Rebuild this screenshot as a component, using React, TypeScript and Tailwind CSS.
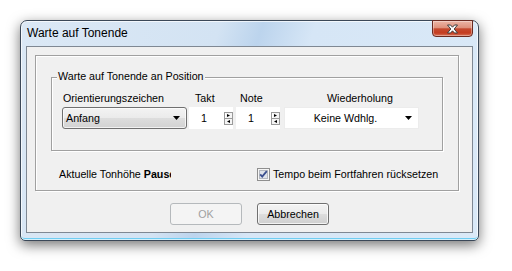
import React from "react";

function SpinArrows() {
  return (
    <svg width="9" height="13" viewBox="0 0 9 13" className="block">
      <rect x="0.5" y="0.5" width="8" height="12" fill="#f4f4f4" stroke="#9a9a9a" />
      <line x1="0.5" y1="6.5" x2="8.5" y2="6.5" stroke="#9a9a9a" />
      <line x1="1.5" y1="1" x2="1.5" y2="6" stroke="#ffffff" />
      <polygon points="3,2 6,3.5 3,5" fill="#000" />
      <polygon points="6,8 3,9.5 6,11" fill="#000" />
    </svg>
  );
}

function Spin() {
  return (
    <div className="w-[44px] h-[22px] bg-white flex items-center">
      <span className="pl-[12px] w-[35px]">1</span>
      <SpinArrows />
    </div>
  );
}

function Arrow() {
  return (
    <svg width="7" height="4" viewBox="0 0 7 4" className="block">
      <polygon points="0,0 7,0 3.5,4" fill="#000" />
    </svg>
  );
}

export default function App() {
  return (
    <div className="w-[512px] h-[271px] bg-white pt-[20px] pl-[20px] overflow-hidden font-['Liberation_Sans',Arial,sans-serif] text-[10.7px] leading-[13px] text-black">
      <div className="relative w-[459px] h-[221px] rounded-t-[7px] rounded-b-[5px] border border-[#3b4858] bg-[linear-gradient(108deg,#dbe8f5_0%,#d3e3f3_38%,#bcd4ed_46%,#d6e6f6_56%,#dae9f7_100%)] shadow-[0_4px_13px_rgba(0,0,0,0.55),inset_0_0_0_1px_rgba(255,255,255,0.7),inset_0_-2px_0_#6fcdf2] flex flex-col">
        <div className="h-[25px] flex items-center pl-[6px] text-[12px] leading-[15px]">
          Warte auf Tonende
        </div>
        <div className="absolute right-[5px] top-[-1px] w-[41px] h-[17px] rounded-b-[4px] border border-[#6a2a20] bg-[linear-gradient(to_bottom,#ecb6a6_0%,#de917c_45%,#c54a2f_52%,#c43c20_80%,#d8765c_100%)] shadow-[inset_0_0_0_1px_rgba(255,255,255,0.35)] flex items-center justify-center">
          <svg width="13" height="10" viewBox="0 0 13 10" className="block">
            <path
              d="M1.5 1 H4.5 L6.5 3.2 L8.5 1 H11.5 L8.2 5 L11.5 9 H8.5 L6.5 6.8 L4.5 9 H1.5 L4.8 5 Z"
              fill="#ffffff"
              stroke="#3d3d3d"
              strokeWidth="1"
              strokeLinejoin="round"
            />
          </svg>
        </div>
        <div className="mx-[5px] h-[187px] border border-[#7f8893] bg-[#f0f0f0] flex flex-col">
          <div className="ml-[8px] mt-[8px] w-[424px] h-[136px] border border-[#a0a0a0] shadow-[1px_1px_0_#ffffff,inset_1px_1px_0_#ffffff] flex flex-col">
            <div className="relative ml-[15px] mt-[21px] w-[392px] h-[74px] border border-[#a0a0a0] shadow-[1px_1px_0_#ffffff,inset_1px_1px_0_#ffffff] flex flex-col">
              <span className="absolute left-[5px] top-[-8px] bg-[#f0f0f0] px-[1px] whitespace-nowrap">
                Warte auf Tonende an Position
              </span>
              <div className="mt-[14px] pl-[10px] flex h-[13px] whitespace-nowrap">
                <span className="w-[125px] pl-[1px]">Orientierungszeichen</span>
                <span className="ml-[2px] w-[44px] pl-[6px]">Takt</span>
                <span className="ml-[3px] w-[44px] pl-[4px]">Note</span>
                <span className="ml-[4px] w-[135px] pl-[43px]">Wiederholung</span>
              </div>
              <div className="mt-[2px] pl-[10px] flex h-[22px] whitespace-nowrap">
                <div className="w-[125px] h-[22px] rounded-[3px] border border-[#707070] bg-[linear-gradient(to_bottom,#f3f3f3_0%,#ebebeb_48%,#dddddd_52%,#d2d2d2_100%)] shadow-[inset_0_0_0_1px_rgba(255,255,255,0.7)] flex items-center">
                  <span className="flex-1 pl-[3px]">Anfang</span>
                  <span className="pr-[6px]">
                    <Arrow />
                  </span>
                </div>
                <div className="ml-[2px]">
                  <Spin />
                </div>
                <div className="ml-[3px]">
                  <Spin />
                </div>
                <div className="ml-[4px] w-[135px] h-[22px] bg-white border border-[#ececec] flex items-center">
                  <span className="flex-1 text-center pl-[6px]">Keine Wdhlg.</span>
                  <span className="w-[18px] flex justify-center pr-[2px]">
                    <Arrow />
                  </span>
                </div>
              </div>
            </div>
            <div className="mt-[17px] pl-[23px] flex items-center h-[13px] whitespace-nowrap">
              <span className="w-[198px] shrink-0 flex items-center">
                <span>Aktuelle Tonhöhe&nbsp;</span>
                <b>Paus</b>
                <b className="w-[2px] overflow-hidden">e</b>
              </span>
              <span className="w-[13px] h-[13px] shrink-0">
                <svg width="13" height="13" viewBox="0 0 13 13" className="block">
                  <rect x="0.5" y="0.5" width="12" height="12" fill="#f6f6f6" stroke="#8f8f8f" />
                  <rect x="2.5" y="2.5" width="8" height="8" fill="#dfe3ea" stroke="#b4b8c0" />
                  <path d="M3.2 6.4 L5.2 8.6 L9.8 3.2" fill="none" stroke="#3b4f8f" strokeWidth="1.8" />
                </svg>
              </span>
              <span className="ml-[3px]">Tempo beim Fortfahren rücksetzen</span>
            </div>
          </div>
          <div className="mt-[12px] flex justify-center gap-[15px]">
            <div className="w-[72px] h-[22px] rounded-[3px] border border-[#b5b9bc] bg-[#f4f4f4] text-[#a0a0a0] flex items-center justify-center">
              OK
            </div>
            <div className="w-[72px] h-[22px] rounded-[3px] border border-[#707070] bg-[linear-gradient(to_bottom,#f3f3f3_0%,#ebebeb_48%,#dddddd_52%,#cfcfcf_100%)] shadow-[inset_0_0_0_1px_rgba(255,255,255,0.75)] flex items-center justify-center">
              Abbrechen
            </div>
          </div>
        </div>
      </div>
    </div>
  );
}
